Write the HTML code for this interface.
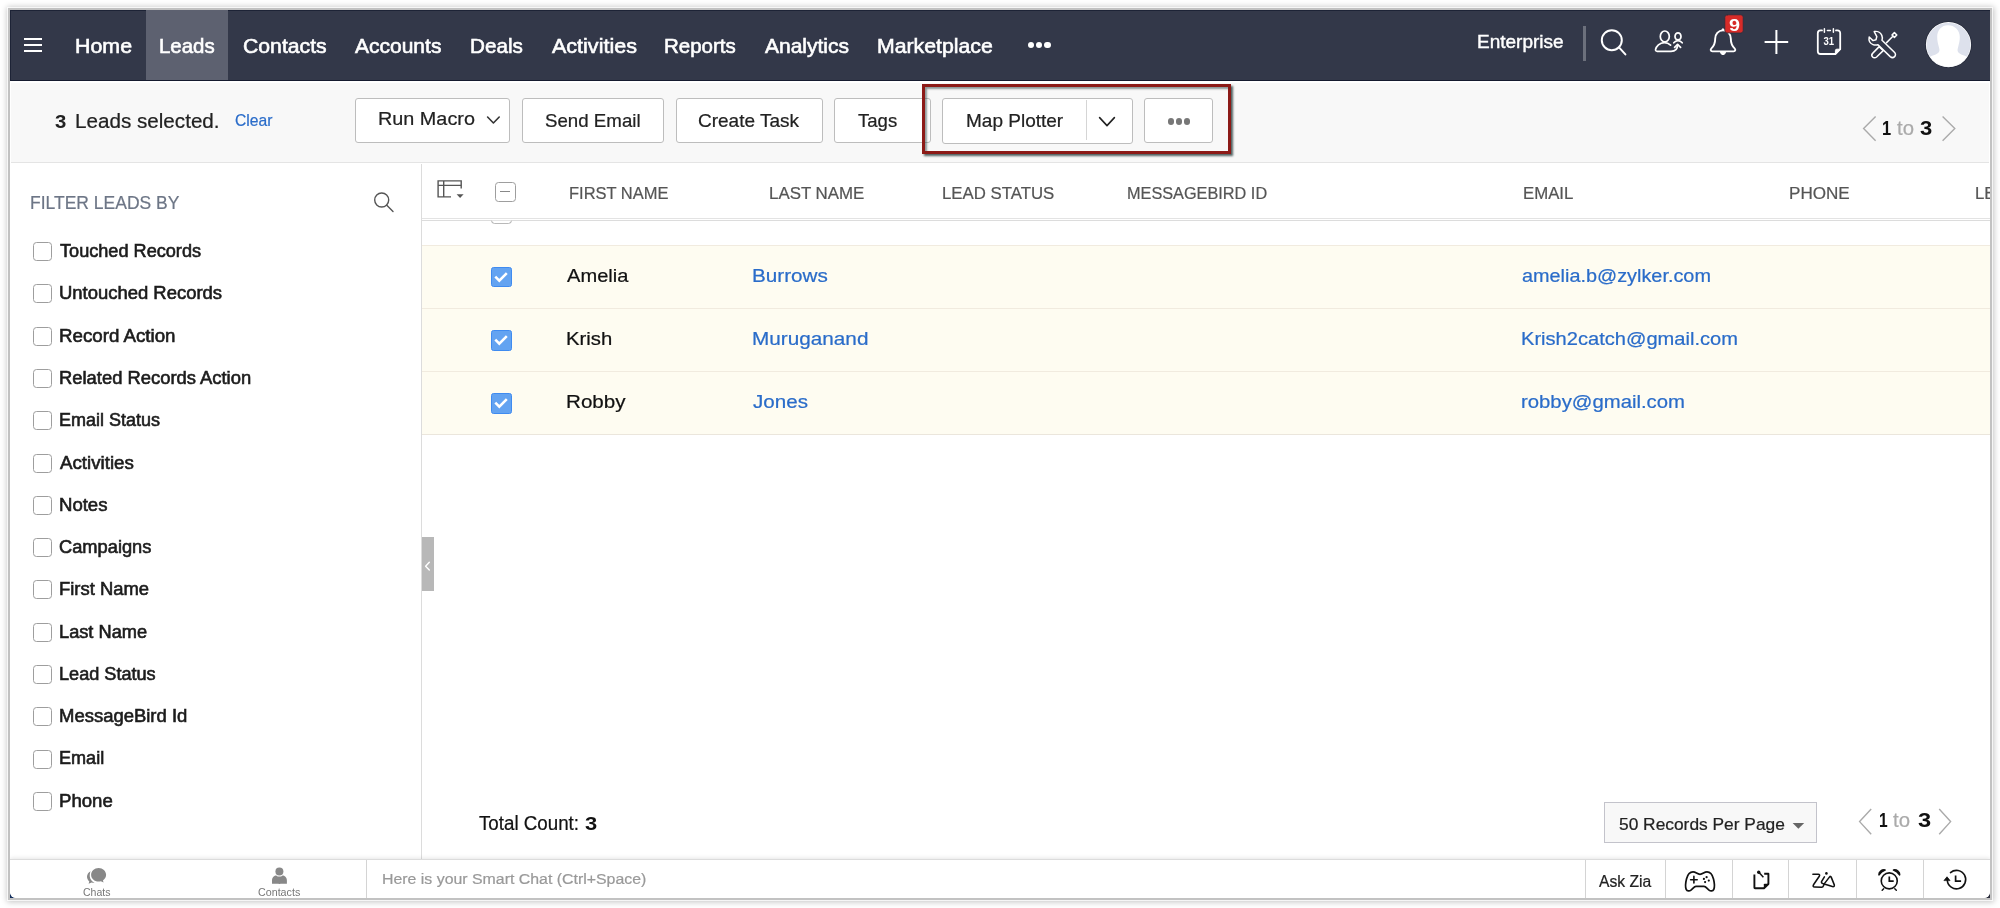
<!DOCTYPE html>
<html lang="en"><head><meta charset="utf-8"><title>Leads - CRM</title>
<style>
html,body{margin:0;padding:0;background:#fff;}
body{width:2000px;height:908px;position:relative;overflow:hidden;font-family:"Liberation Sans", sans-serif;}
.frame{position:absolute;left:8px;top:8px;width:1984px;height:892px;box-sizing:border-box;background:#fff;border:2px solid #c2c2c2;box-shadow:0 0 0 1px rgba(255,255,255,.75),0 0 6px 1.5px rgba(0,0,0,.24);}
.corner{position:absolute;top:891px;width:7px;height:7px;}
.app{position:absolute;left:10px;top:10px;width:1980px;height:888px;background:#fff;overflow:hidden;border-radius:0 0 6px 6px;font-family:"Liberation Sans", sans-serif;will-change:transform;}
.app header,.app section,.app aside,.app main,.app footer{position:absolute;display:block;margin:0;padding:0;box-sizing:border-box;}
.app header *,.app section *,.app aside *,.app main *,.app footer *{position:absolute;margin:0;padding:0;}
.nav{background:#333849;border-top:1px solid #1d2336;border-bottom:1px solid #151b2f;border-left:1px solid #1d2336;}
.nav>*{margin:-1px 0 0 -1px !important;}
.toolbar{background:#f8f8f8;border:solid #fff;border-width:2px 1.4px 0 1px;box-shadow:inset 0 -1px 0 #e4e4e4;}
.toolbar>*{margin:-2px 0 0 -1px !important;}
.bar{background:#fff;border-top:1.2px solid #dcdcdc;box-shadow:0 -1px 4px rgba(0,0,0,.10);}
.bar>*{margin:-1.2px 0 0 0 !important;}
.t{white-space:nowrap;line-height:1;transform-origin:0 0;display:block;text-decoration:none;font-style:normal;}
.tab-active{background:#5d6170;}
.burger i{left:0;width:17.5px;height:2px;background:#fff;}
.dot{border-radius:50%;}
.btn{box-sizing:border-box;background:#fff;border:1px solid #bdbdbd;border-radius:3px;}
.hilite{box-sizing:border-box;border:3px solid #8c1a17;box-shadow:2px 2px 2px rgba(40,60,60,.8), inset 2px 2px 2px rgba(40,60,60,.5);}
.cb{box-sizing:border-box;border:1.3px solid #9e9e9e;border-radius:3.5px;background:#fff;}
.cb-on{box-sizing:border-box;background:#63a3f1;border:1px solid #3f8bf0;border-radius:2.5px;}
.cb-on svg{left:-1px;top:-1px;}
.row{box-sizing:border-box;background:#fefcf1;border-top:1px solid #f1ebdf;}
svg.ic{position:absolute;left:0;top:0;overflow:visible;}
</style></head><body>
<div class="frame"></div>
<div class="corner" style="left:10px;background:#14305e"></div>
<div class="corner" style="left:1983px;background:#2b2e3c"></div>
<div class="app">
<header class="nav" style="left:0px;top:0px;width:1980px;height:70.5px;">
<div class="tab-active" style="left:136px;top:0px;width:82px;height:69.5px;"></div>
<div class="burger" style="left:14.25px;top:27.75px;width:17.5px;height:14.5px;"><i style="top:0"></i><i style="top:6.25px"></i><i style="top:12.5px"></i></div>
<div class="dot" style="left:1017.5px;top:31.75px;width:6.5px;height:6.5px;background:#fff;"></div>
<div class="dot" style="left:1025.75px;top:31.75px;width:6.5px;height:6.5px;background:#fff;"></div>
<div class="dot" style="left:1034px;top:31.75px;width:6.5px;height:6.5px;background:#fff;"></div>
<div style="left:1573px;top:16px;width:3px;height:35px;background:#6c707c;"></div>
<a class="t" id="n_home" style="left:65px;top:25px;font-size:21px;font-weight:400;color:#fff;transform:scaleX(1.0184);-webkit-text-stroke:0.6px #fff;">Home</a>
<a class="t" id="n_leads" style="left:149px;top:25px;font-size:21px;font-weight:400;color:#fff;transform:scaleX(0.9739);-webkit-text-stroke:0.6px #fff;">Leads</a>
<a class="t" id="n_contacts" style="left:233px;top:25px;font-size:21px;font-weight:400;color:#fff;transform:scaleX(1.0093);-webkit-text-stroke:0.6px #fff;">Contacts</a>
<a class="t" id="n_accounts" style="left:345px;top:25px;font-size:21px;font-weight:400;color:#fff;transform:scaleX(1.0000);-webkit-text-stroke:0.6px #fff;">Accounts</a>
<a class="t" id="n_deals" style="left:460px;top:25px;font-size:21px;font-weight:400;color:#fff;transform:scaleX(0.9843);-webkit-text-stroke:0.6px #fff;">Deals</a>
<a class="t" id="n_activities" style="left:542px;top:25px;font-size:21px;font-weight:400;color:#fff;transform:scaleX(1.0246);-webkit-text-stroke:0.6px #fff;">Activities</a>
<a class="t" id="n_reports" style="left:654px;top:25px;font-size:21px;font-weight:400;color:#fff;transform:scaleX(0.9765);-webkit-text-stroke:0.6px #fff;">Reports</a>
<a class="t" id="n_analytics" style="left:755px;top:25px;font-size:21px;font-weight:400;color:#fff;transform:scaleX(1.0000);-webkit-text-stroke:0.6px #fff;">Analytics</a>
<a class="t" id="n_market" style="left:867px;top:25px;font-size:21px;font-weight:400;color:#fff;transform:scaleX(1.0123);-webkit-text-stroke:0.6px #fff;">Marketplace</a>
<span class="t" id="n_ent" style="left:1467px;top:23px;font-size:18.5px;font-weight:400;color:#fff;transform:scaleX(1.0270);-webkit-text-stroke:0.4px #fff;">Enterprise</span>
<span class="t" id="n_badge" style="left:1719px;top:8px;font-size:16px;font-weight:700;color:#fff;transform:scaleX(1.2372);z-index:3;">9</span>
</header>
<section class="toolbar" style="left:0px;top:70.5px;width:1980px;height:82.5px;">
<div class="btn" style="left:345px;top:17.5px;width:155px;height:44.5px;"></div>
<div class="btn" style="left:511.5px;top:17.5px;width:142.5px;height:44.5px;"></div>
<div class="btn" style="left:665.5px;top:17.5px;width:147px;height:44.5px;"></div>
<div class="btn" style="left:824px;top:17.5px;width:96.5px;height:44.5px;"></div>
<div class="btn" style="left:932.2px;top:17.8px;width:191px;height:45.5px;"></div>
<div style="left:1076px;top:19px;width:1px;height:40px;background:#d5d5d5;"></div>
<div class="btn" style="left:1134.3px;top:17.5px;width:68.7px;height:45.1px;"></div>
<div class="dot" style="left:1157.75px;top:37.65px;width:6.5px;height:6.5px;background:#777;"></div>
<div class="dot" style="left:1165.75px;top:37.65px;width:6.5px;height:6.5px;background:#777;"></div>
<div class="dot" style="left:1173.75px;top:37.65px;width:6.5px;height:6.5px;background:#777;"></div>
<div class="hilite" style="left:912.1px;top:3.4px;width:309.3px;height:70.5px;"></div>
<b class="t" id="t_3" style="left:45px;top:32.5px;font-size:18px;font-weight:700;color:#222;transform:scaleX(1.1287);">3</b>
<span class="t" id="t_sel" style="left:65px;top:30.5px;font-size:20.65px;font-weight:400;color:#222;transform:scaleX(1.0000);-webkit-text-stroke:0.22px #222;">Leads selected.</span>
<a class="t" id="t_clear" style="left:225px;top:32.5px;font-size:15.75px;font-weight:400;color:#2a6cc9;transform:scaleX(0.9954);-webkit-text-stroke:0.22px #2a6cc9;">Clear</a>
<span class="t" id="t_run" style="left:368px;top:28.5px;font-size:19px;font-weight:400;color:#222;transform:scaleX(1.0431);-webkit-text-stroke:0.22px #222;">Run Macro</span>
<span class="t" id="t_send" style="left:535px;top:30.5px;font-size:19px;font-weight:400;color:#222;transform:scaleX(0.9837);-webkit-text-stroke:0.22px #222;">Send Email</span>
<span class="t" id="t_create" style="left:688px;top:30.5px;font-size:19px;font-weight:400;color:#222;transform:scaleX(1.0000);-webkit-text-stroke:0.22px #222;">Create Task</span>
<span class="t" id="t_tags" style="left:848px;top:30.5px;font-size:19px;font-weight:400;color:#222;transform:scaleX(0.9772);-webkit-text-stroke:0.22px #222;">Tags</span>
<span class="t" id="t_map" style="left:956px;top:30.5px;font-size:19px;font-weight:400;color:#222;transform:scaleX(1.0000);-webkit-text-stroke:0.22px #222;">Map Plotter</span>
<b class="t" id="t_p1" style="left:1872px;top:38.5px;font-size:19.5px;font-weight:700;color:#111;transform:scaleX(0.8440);">1</b>
<span class="t" id="t_pto" style="left:1887px;top:38.5px;font-size:19.5px;font-weight:400;color:#aaa;transform:scaleX(1.0424);-webkit-text-stroke:0.22px #aaa;">to</span>
<b class="t" id="t_p3" style="left:1910px;top:38.5px;font-size:19.5px;font-weight:700;color:#111;transform:scaleX(1.1279);">3</b>
</section>
<aside class="filters" style="left:0px;top:153px;width:411px;height:696px;">
<div class="cb" style="left:23px;top:79px;width:19px;height:19px;"></div>
<div class="cb" style="left:23px;top:121.3px;width:19px;height:19px;"></div>
<div class="cb" style="left:23px;top:163.6px;width:19px;height:19px;"></div>
<div class="cb" style="left:23px;top:205.9px;width:19px;height:19px;"></div>
<div class="cb" style="left:23px;top:248.2px;width:19px;height:19px;"></div>
<div class="cb" style="left:23px;top:290.5px;width:19px;height:19px;"></div>
<div class="cb" style="left:23px;top:332.8px;width:19px;height:19px;"></div>
<div class="cb" style="left:23px;top:375.1px;width:19px;height:19px;"></div>
<div class="cb" style="left:23px;top:417.4px;width:19px;height:19px;"></div>
<div class="cb" style="left:23px;top:459.7px;width:19px;height:19px;"></div>
<div class="cb" style="left:23px;top:502px;width:19px;height:19px;"></div>
<div class="cb" style="left:23px;top:544.3px;width:19px;height:19px;"></div>
<div class="cb" style="left:23px;top:586.6px;width:19px;height:19px;"></div>
<div class="cb" style="left:23px;top:628.9px;width:19px;height:19px;"></div>
<h2 class="t" id="s_title" style="left:20px;top:30px;font-size:19px;font-weight:400;color:#6d7686;transform:scaleX(0.9208);-webkit-text-stroke:0.22px #6d7686;">FILTER LEADS BY</h2>
<label class="t" id="s_l0" style="left:50px;top:80px;font-size:17.5px;font-weight:400;color:#1c1c1c;transform:scaleX(1.0355);-webkit-text-stroke:0.6px #1c1c1c;">Touched Records</label>
<label class="t" id="s_l1" style="left:49px;top:122px;font-size:17.5px;font-weight:400;color:#1c1c1c;transform:scaleX(1.0540);-webkit-text-stroke:0.6px #1c1c1c;">Untouched Records</label>
<label class="t" id="s_l2" style="left:49px;top:165px;font-size:17.5px;font-weight:400;color:#1c1c1c;transform:scaleX(1.0693);-webkit-text-stroke:0.6px #1c1c1c;">Record Action</label>
<label class="t" id="s_l3" style="left:49px;top:207px;font-size:17.5px;font-weight:400;color:#1c1c1c;transform:scaleX(1.0507);-webkit-text-stroke:0.6px #1c1c1c;">Related Records Action</label>
<label class="t" id="s_l4" style="left:49px;top:249px;font-size:17.5px;font-weight:400;color:#1c1c1c;transform:scaleX(1.0293);-webkit-text-stroke:0.6px #1c1c1c;">Email Status</label>
<label class="t" id="s_l5" style="left:50px;top:292px;font-size:17.5px;font-weight:400;color:#1c1c1c;transform:scaleX(1.0691);-webkit-text-stroke:0.6px #1c1c1c;">Activities</label>
<label class="t" id="s_l6" style="left:49px;top:334px;font-size:17.5px;font-weight:400;color:#1c1c1c;transform:scaleX(1.0596);-webkit-text-stroke:0.6px #1c1c1c;">Notes</label>
<label class="t" id="s_l7" style="left:49px;top:376px;font-size:17.5px;font-weight:400;color:#1c1c1c;transform:scaleX(1.0440);-webkit-text-stroke:0.6px #1c1c1c;">Campaigns</label>
<label class="t" id="s_l8" style="left:49px;top:418px;font-size:17.5px;font-weight:400;color:#1c1c1c;transform:scaleX(1.0515);-webkit-text-stroke:0.6px #1c1c1c;">First Name</label>
<label class="t" id="s_l9" style="left:49px;top:461px;font-size:17.5px;font-weight:400;color:#1c1c1c;transform:scaleX(1.0408);-webkit-text-stroke:0.6px #1c1c1c;">Last Name</label>
<label class="t" id="s_l10" style="left:49px;top:503px;font-size:17.5px;font-weight:400;color:#1c1c1c;transform:scaleX(1.0350);-webkit-text-stroke:0.6px #1c1c1c;">Lead Status</label>
<label class="t" id="s_l11" style="left:49px;top:545px;font-size:17.5px;font-weight:400;color:#1c1c1c;transform:scaleX(1.0554);-webkit-text-stroke:0.6px #1c1c1c;">MessageBird Id</label>
<label class="t" id="s_l12" style="left:49px;top:587px;font-size:17.5px;font-weight:400;color:#1c1c1c;transform:scaleX(1.0328);-webkit-text-stroke:0.6px #1c1c1c;">Email</label>
<label class="t" id="s_l13" style="left:49px;top:630px;font-size:17.5px;font-weight:400;color:#1c1c1c;transform:scaleX(1.0627);-webkit-text-stroke:0.6px #1c1c1c;">Phone</label>
</aside>
<main class="list" style="left:411px;top:153px;width:1569px;height:696px;">
<div style="left:0px;top:0.5px;width:1px;height:696px;background:#dcdcdc;"></div>
<div style="left:0.8px;top:374px;width:12.6px;height:54.4px;background:#b8b8b8;"></div>
<div style="left:1px;top:54.6px;width:1568px;height:1.7px;background:#e3e3e3;"></div>
<div style="left:1px;top:57.3px;width:1568px;height:1px;background:#dcdcdc;"></div>
<div class="cb" style="left:70.2px;top:41.8px;width:20.6px;height:19px;clip-path:inset(16px 0 0 0);border-color:#a2a2a2;"></div>
<div class="cb" style="left:74.2px;top:18.9px;width:20.6px;height:20px;"><i style="position:absolute;left:4px;top:8px;width:9.5px;height:1.5px;background:#888"></i></div>
<div class="row" style="left:1px;top:81.5px;width:1568px;height:63.25px;"></div>
<div class="cb-on" style="left:70.2px;top:103.9px;width:20.6px;height:20.4px;"><svg width="20.6" height="20.4" viewBox="0 0 20.6 20.4"><path d="M4.3 9.6 L8.3 13.6 L15.8 6.1" fill="none" stroke="#fff" stroke-width="2.6"/></svg></div>
<div class="row" style="left:1px;top:144.75px;width:1568px;height:63.25px;"></div>
<div class="cb-on" style="left:70.2px;top:167.15px;width:20.6px;height:20.4px;"><svg width="20.6" height="20.4" viewBox="0 0 20.6 20.4"><path d="M4.3 9.6 L8.3 13.6 L15.8 6.1" fill="none" stroke="#fff" stroke-width="2.6"/></svg></div>
<div class="row" style="left:1px;top:208px;width:1568px;height:63.25px;"></div>
<div class="cb-on" style="left:70.2px;top:230.4px;width:20.6px;height:20.4px;"><svg width="20.6" height="20.4" viewBox="0 0 20.6 20.4"><path d="M4.3 9.6 L8.3 13.6 L15.8 6.1" fill="none" stroke="#fff" stroke-width="2.6"/></svg></div>
<div style="left:1px;top:271.25px;width:1568px;height:1px;background:#ebe6dc;"></div>
<div style="left:1183.25px;top:639.4px;width:212.5px;height:40.2px;box-sizing:border-box;background:#f8f8f8;border:1px solid #c3c3cb;"></div>
<span class="t th" id="h_first" style="left:148px;top:23px;font-size:16.8px;font-weight:400;color:#555;transform:scaleX(0.9817);-webkit-text-stroke:0.22px #555;">FIRST NAME</span>
<span class="t th" id="h_last" style="left:348px;top:23px;font-size:16.8px;font-weight:400;color:#555;transform:scaleX(1.0057);-webkit-text-stroke:0.22px #555;">LAST NAME</span>
<span class="t th" id="h_status" style="left:521px;top:23px;font-size:16.8px;font-weight:400;color:#555;transform:scaleX(1.0000);-webkit-text-stroke:0.22px #555;">LEAD STATUS</span>
<span class="t th" id="h_mb" style="left:706px;top:23px;font-size:16.8px;font-weight:400;color:#555;transform:scaleX(0.9696);-webkit-text-stroke:0.22px #555;">MESSAGEBIRD ID</span>
<span class="t th" id="h_email" style="left:1102px;top:23px;font-size:16.8px;font-weight:400;color:#555;transform:scaleX(1.0000);-webkit-text-stroke:0.22px #555;">EMAIL</span>
<span class="t th" id="h_phone" style="left:1368px;top:23px;font-size:16.8px;font-weight:400;color:#555;transform:scaleX(1.0176);-webkit-text-stroke:0.22px #555;">PHONE</span>
<span class="t th" id="h_le" style="left:1554px;top:23px;font-size:16.8px;font-weight:400;color:#555;transform:scaleX(1.0000);-webkit-text-stroke:0.22px #555;">LE</span>
<span class="t" id="r0_f" style="left:146px;top:104px;font-size:18.7px;font-weight:400;color:#111;transform:scaleX(1.0747);-webkit-text-stroke:0.22px #111;">Amelia</span>
<a class="t" id="r0_l" style="left:331px;top:104px;font-size:18.7px;font-weight:400;color:#2a6cc9;transform:scaleX(1.1075);-webkit-text-stroke:0.22px #2a6cc9;">Burrows</a>
<a class="t" id="r0_e" style="left:1101px;top:104px;font-size:18.7px;font-weight:400;color:#2a6cc9;transform:scaleX(1.0622);-webkit-text-stroke:0.22px #2a6cc9;">amelia.b@zylker.com</a>
<span class="t" id="r1_f" style="left:145px;top:167px;font-size:18.7px;font-weight:400;color:#111;transform:scaleX(1.0859);-webkit-text-stroke:0.22px #111;">Krish</span>
<a class="t" id="r1_l" style="left:331px;top:167px;font-size:18.7px;font-weight:400;color:#2a6cc9;transform:scaleX(1.1096);-webkit-text-stroke:0.22px #2a6cc9;">Muruganand</a>
<a class="t" id="r1_e" style="left:1100px;top:167px;font-size:18.7px;font-weight:400;color:#2a6cc9;transform:scaleX(1.0754);-webkit-text-stroke:0.22px #2a6cc9;">Krish2catch@gmail.com</a>
<span class="t" id="r2_f" style="left:145px;top:230px;font-size:18.7px;font-weight:400;color:#111;transform:scaleX(1.1025);-webkit-text-stroke:0.22px #111;">Robby</span>
<a class="t" id="r2_l" style="left:332px;top:230px;font-size:18.7px;font-weight:400;color:#2a6cc9;transform:scaleX(1.1015);-webkit-text-stroke:0.22px #2a6cc9;">Jones</a>
<a class="t" id="r2_e" style="left:1100px;top:230px;font-size:18.7px;font-weight:400;color:#2a6cc9;transform:scaleX(1.0868);-webkit-text-stroke:0.22px #2a6cc9;">robby@gmail.com</a>
<span class="t" id="f_total" style="left:58px;top:651px;font-size:19.5px;font-weight:400;color:#111;transform:scaleX(0.9611);-webkit-text-stroke:0.22px #111;">Total Count:</span>
<b class="t" id="f_total3" style="left:164px;top:651px;font-size:19px;font-weight:700;color:#111;transform:scaleX(1.1539);">3</b>
<span class="t" id="f_rpp" style="left:1198px;top:653px;font-size:17px;font-weight:400;color:#222;transform:scaleX(1.0203);-webkit-text-stroke:0.22px #222;">50 Records Per Page</span>
<b class="t" id="f_p1" style="left:1458px;top:648px;font-size:19.5px;font-weight:700;color:#111;transform:scaleX(0.7989);">1</b>
<span class="t" id="f_pto" style="left:1472px;top:648px;font-size:19.5px;font-weight:400;color:#aaa;transform:scaleX(1.0455);-webkit-text-stroke:0.22px #aaa;">to</span>
<b class="t" id="f_p3" style="left:1497px;top:648px;font-size:19.5px;font-weight:700;color:#111;transform:scaleX(1.2126);">3</b>
</main>
<footer class="bar" style="left:0px;top:848.8px;width:1980px;height:39.2px;">
<div style="left:356px;top:1.2px;width:1px;height:38.5px;background:#d4d4d4;"></div>
<div style="left:1575px;top:1.2px;width:1px;height:38.5px;background:#d4d4d4;"></div>
<div style="left:1654.5px;top:1.2px;width:1px;height:38.5px;background:#d4d4d4;"></div>
<div style="left:1722px;top:1.2px;width:1px;height:38.5px;background:#d4d4d4;"></div>
<div style="left:1778.25px;top:1.2px;width:1px;height:38.5px;background:#d4d4d4;"></div>
<div style="left:1845.75px;top:1.2px;width:1px;height:38.5px;background:#d4d4d4;"></div>
<div style="left:1912.75px;top:1.2px;width:1px;height:38.5px;background:#d4d4d4;"></div>
<span class="t" id="b_chats" style="left:73px;top:28.2px;font-size:11px;font-weight:400;color:#777;transform:scaleX(0.9575);">Chats</span>
<span class="t" id="b_contacts" style="left:248px;top:28.2px;font-size:11px;font-weight:400;color:#777;transform:scaleX(0.9729);">Contacts</span>
<span class="t" id="b_smart" style="left:372px;top:12.2px;font-size:15.5px;font-weight:400;color:#999;transform:scaleX(1.0245);-webkit-text-stroke:0.22px #999;">Here is your Smart Chat (Ctrl+Space)</span>
<span class="t" id="b_ask" style="left:1589px;top:15.2px;font-size:16px;font-weight:400;color:#222;transform:scaleX(0.9786);-webkit-text-stroke:0.22px #222;">Ask Zia</span>
</footer>
<svg class="ic" width="1980" height="889" viewBox="10 10 1980 889" fill="none" stroke-linecap="round" stroke-linejoin="round">
<!-- nav: search -->
<g stroke="#fff" stroke-width="2">
<circle cx="1611.8" cy="40.2" r="10"/>
<path d="M1619 47.4 L1625.4 54.4"/>
</g>
<!-- nav: users -->
<g stroke="#fff" stroke-width="1.7">
<ellipse cx="1664.8" cy="36.4" rx="4.5" ry="5.4"/>
<path d="M1670.6 45.2 C1668.5 43.2 1666.5 42.6 1664.3 42.6 C1659.5 42.6 1656.3 46.5 1655.6 49.3 C1655.3 50.6 1656 51.3 1657.2 51.3 L1671 51.3 C1675 51.3 1677.6 49 1677.6 45"/>
<path d="M1674.6 47.4 L1677.6 44.4 L1680.6 47.4"/>
<ellipse cx="1678" cy="36.4" rx="3" ry="3.5"/>
<path d="M1673.8 42.8 C1675 41.2 1676.3 40.6 1678 40.6 C1679.7 40.6 1681 41.2 1682.2 42.8"/>
</g>
<!-- nav: bell -->
<g stroke="#fff" stroke-width="1.9">
<path d="M1723 30.4 C1718.2 30.4 1715.2 34 1715.2 38.6 C1715.2 43.6 1713.6 46.4 1711.4 48.4 C1710.2 49.6 1710.6 51.4 1712.4 51.4 L1733.6 51.4 C1735.4 51.4 1735.8 49.6 1734.6 48.4 C1732.4 46.4 1730.8 43.6 1730.8 38.6 C1730.8 34 1727.8 30.4 1723 30.4 Z"/>
<path d="M1720.4 52 C1720.6 53.6 1721.6 54.6 1723 54.6 C1724.4 54.6 1725.4 53.6 1725.6 52" fill="#fff" stroke-width="1"/>
<circle cx="1723" cy="29.6" r="0.9" fill="#fff" stroke-width="1"/>
</g>
<rect x="1724.8" y="14.8" width="18.4" height="18.2" rx="2.5" fill="#d72b28" stroke="#2a3040" stroke-width="0.8"/>
<!-- nav: plus -->
<path d="M1764.6 42 H1788.2 M1776.4 30 V54" stroke="#fff" stroke-width="2" stroke-linecap="butt"/>
<!-- nav: calendar -->
<g stroke="#fff" stroke-width="1.8">
<path d="M1822 30.4 H1820.6 C1818.9 30.4 1817.8 31.5 1817.8 33.2 V51.2 C1817.8 52.9 1818.9 54 1820.6 54 H1835.4 L1840.2 49.2 V33.2 C1840.2 31.5 1839.1 30.4 1837.4 30.4 H1836"/>
<path d="M1824.4 28.8 V32.2 M1833.4 28.8 V32.2 M1827.4 30.4 H1830.4" stroke-width="1.5"/>
<path d="M1835.4 54 V50.6 C1835.4 49.7 1835.9 49.2 1836.8 49.2 H1840.2 Z" fill="#fff" stroke-width="1"/>
</g>
<text x="1828.7" y="45.4" font-family="Liberation Sans, sans-serif" font-size="10" font-weight="700" fill="#fff" text-anchor="middle" textLength="10.6" lengthAdjust="spacingAndGlyphs">31</text>
<!-- nav: tools -->
<g stroke="#fff" stroke-width="1.5">
<!-- screwdriver -->
<path d="M1892.4 36.8 L1886.6 42.6"/>
<path d="M1894.4 32.6 L1896.8 35 L1894.4 37.4 L1892 35 Z" transform="rotate(0 1894.4 35)"/>
<path d="M1879.2 46.6 L1883.2 50.6 L1876.6 57 C1875.4 58.1 1873.6 58.1 1872.6 57 C1871.6 55.9 1871.6 54.2 1872.8 53.1 Z"/>
<!-- wrench -->
<path d="M1874.2 31.6 C1877.4 30.8 1880.6 32.6 1881.8 35.4 C1882.6 37.2 1882.4 38.8 1882 40.2 L1894.4 52.2 C1895.8 53.6 1895.8 55.4 1894.6 56.6 C1893.4 57.8 1891.6 57.8 1890.2 56.6 L1878 44.8 C1876.4 45.2 1874.8 45.4 1873 44.6 C1870 43.4 1868.6 40.2 1869.2 37 L1873 40.6 L1876 39.8 L1876.8 36.6 Z" fill="#333849"/>
</g>
<!-- avatar -->
<clipPath id="avc"><circle cx="1948.5" cy="44.7" r="22"/></clipPath>
<circle cx="1948.5" cy="44.7" r="23.4" fill="#252a3a" stroke="none"/>
<circle cx="1948.5" cy="44.7" r="22.6" fill="#fff" stroke="none"/>
<g clip-path="url(#avc)" stroke="none">
<rect x="1925" y="21" width="48" height="48" fill="#dde1ec"/>
<path d="M1948 25.2 C1941.5 25.2 1937.2 30 1937.2 37 C1937.2 41 1938 43.5 1938.6 46 C1939.2 48.5 1940.2 50.5 1938.6 52.6 C1936.6 55 1931 55.8 1928 57.8 L1922 70 L1975 70 L1969 57.8 C1966 55.8 1960.4 55 1958.4 52.6 C1956.8 50.5 1957.8 48.5 1958.4 46 C1959 43.5 1959.8 41 1959.8 37 C1959.8 30 1954.5 25.2 1948 25.2 Z" fill="#fff"/>
</g>
<!-- toolbar chevrons -->
<path d="M487.6 117 L493.4 123 L499.2 117" stroke="#333" stroke-width="1.6"/>
<path d="M1099.6 117.6 L1107 125.6 L1114.4 117.6" stroke="#222" stroke-width="1.6"/>
<!-- pager top -->
<g stroke="#aaa" stroke-width="1.4" stroke-linecap="butt" stroke-linejoin="miter">
<path d="M1875.6 116.4 L1863.6 128.6 L1875.6 140.8"/>
<path d="M1942.6 116.4 L1954.8 128.6 L1942.6 140.8"/>
<path d="M1871.2 809 L1859.6 821.6 L1871.2 834.2"/>
<path d="M1939.2 809 L1950.6 821.6 L1939.2 834.2"/>
</g>
<!-- dropdown tri -->
<path d="M1792.6 823 H1804.2 L1798.4 828.8 Z" fill="#666" stroke="none"/>
<!-- sidebar search -->
<g stroke="#555" stroke-width="1.4">
<circle cx="381.7" cy="200" r="7"/>
<path d="M386.8 205.2 L393 211.4"/>
</g>
<!-- column icon -->
<g stroke="#555" stroke-width="1.4" stroke-linecap="butt" stroke-linejoin="miter">
<path d="M461.2 188.4 V180.9 H438.1 V196.9 H451"/>
<path d="M438.1 185.4 H461.2 M443.7 180.9 V196.9"/>
</g>
<path d="M456.6 194.2 H463.6 L460.1 198 Z" fill="#555" stroke="none"/>
<!-- collapse chevron -->
<path d="M429.3 562.3 L425.6 566.2 L429.3 570.1" stroke="#fff" stroke-width="1.4"/>
<!-- footer: chats -->
<g fill="#888" stroke="none">
<path d="M98.6 868 C94.4 868 91.1 871 91.1 874.8 C91.1 878.6 94.4 881.6 98.6 881.6 C99.4 881.6 100.2 881.5 100.9 881.3 L103.6 882.6 L102.9 880.4 C104.8 879.2 106.1 877.1 106.1 874.8 C106.1 871 102.8 868 98.6 868 Z"/>
<path d="M90.6 871.2 C88.4 872.4 87 874.4 87 876.8 C87 878.6 87.9 880.3 89.3 881.4 L88.6 883.8 L91.6 882.5 C92.6 882.8 93.6 882.9 94.6 882.8 C92 881.6 90 879.4 89.8 876.4 C89.7 874.4 90 872.6 90.6 871.2 Z"/>
<!-- footer: contacts -->
<circle cx="279.4" cy="871.6" r="4"/>
<path d="M272 883.8 V880.4 C272 877.2 274.4 875.4 276.2 875.4 C277.2 876.2 278.2 876.6 279.4 876.6 C280.6 876.6 281.6 876.2 282.6 875.4 C284.4 875.4 286.9 877.2 286.9 880.4 V883.8 C286.9 883.9 272 883.9 272 883.8 Z"/>
</g>
<!-- footer: gamepad -->
<g stroke="#111" stroke-width="1.7">
<path d="M1700 874.3 C1697 874.3 1696 871.9 1693 871.9 C1689.5 871.9 1687.5 875 1686.5 879 C1685.5 883 1685.2 887 1686.2 889.3 C1687.1 891.3 1689.5 891.3 1691 890.1 C1693 888.6 1694 886.3 1696 886.3 L1704 886.3 C1706 886.3 1707 888.6 1709 890.1 C1710.500 891.3 1712.9 891.3 1713.8 889.3 C1714.8 887 1714.5 883 1713.5 879 C1712.5 875 1710.500 871.9 1707 871.9 C1704 871.9 1703 874.3 1700 874.3 Z"/>
<path d="M1690.600 879.7 H1697.2 M1693.9 876.4 V883" stroke-width="1.6"/>
</g>
<g fill="#111" stroke="none">
<circle cx="1706.6" cy="877.2" r="1.1"/><circle cx="1703.9" cy="878.9" r="1.1"/><circle cx="1708.8" cy="880.600" r="1.1"/><circle cx="1705.1" cy="882.1" r="1.1"/>
</g>
<!-- footer: note -->
<g stroke="#111" stroke-width="1.9" stroke-linecap="butt" stroke-linejoin="round">
<path d="M1764.2 873.7 H1768.4 V884 L1764 888.3 H1755 Q1754.4 888.3 1754.4 887.600 V874.4"/>
<path d="M1758.8 872.3 L1763.400 877.2" stroke-width="1.5"/>
</g>
<circle cx="1758.7" cy="872.200" r="1.7" fill="#111" stroke="none"/>
<path d="M1763.8 888.4 V884.6 Q1763.8 883.8 1764.600 883.8 H1768.5 Z" fill="#111" stroke="none"/>
<!-- footer: zia -->
<path d="M1812.9 874.3 H1818.2 Q1820.3 874.3 1819.3 876.2 L1813.5 884.8 Q1812.4 887 1814.600 887.1 L1821.600 887.3 Q1823 887.200 1823.600 885.500 L1824.200 883.900 L1829.600 876.900 Q1830.500 875.800 1831.200 877.100 L1834.300 884.900 Q1834.700 887 1832.400 886.600 L1824.200 883.900 Q1821 883.400 1821.500 881.600 L1824.400 876.900" stroke="#111" stroke-width="1.55"/>
<circle cx="1826.400" cy="873.400" r="1.3" fill="#111" stroke="none"/>
<!-- footer: alarm -->
<g stroke="#111" stroke-width="1.600">
<circle cx="1889.25" cy="880.9" r="8"/>
<path d="M1889.300 876.400 V881.200 H1893.700" stroke-linecap="butt" stroke-linejoin="miter" stroke-width="1.7"/>
<path d="M1882.200 890.200 L1883.700 888.800 M1896.300 890.200 L1894.800 888.800" stroke-width="1.5"/>
</g>
<path d="M1879 874.800 C1878.800 871.800 1881.800 869.500 1885 870 C1882.600 871 1880.400 872.800 1879 874.800 Z M1899.600 874.800 C1899.800 871.800 1896.800 869.500 1893.600 870 C1896 871 1898.200 872.800 1899.600 874.800 Z" fill="#111" stroke="#111" stroke-width="1.7"/>
<!-- footer: history -->
<g stroke="#111" stroke-width="1.600">
<path d="M1950.500 872.600 A9.200 9.200 0 1 1 1947.300 880.200" />
<path d="M1955.600 875.400 V881.200 H1961.100" stroke-linecap="butt" stroke-linejoin="miter" stroke-width="1.7"/>
</g>
<path d="M1944.200 880.300 L1947 876.800 L1949.800 880.300 Z" fill="#111" stroke="#111" stroke-width="0.8"/>
</svg>

</div>
</body></html>
